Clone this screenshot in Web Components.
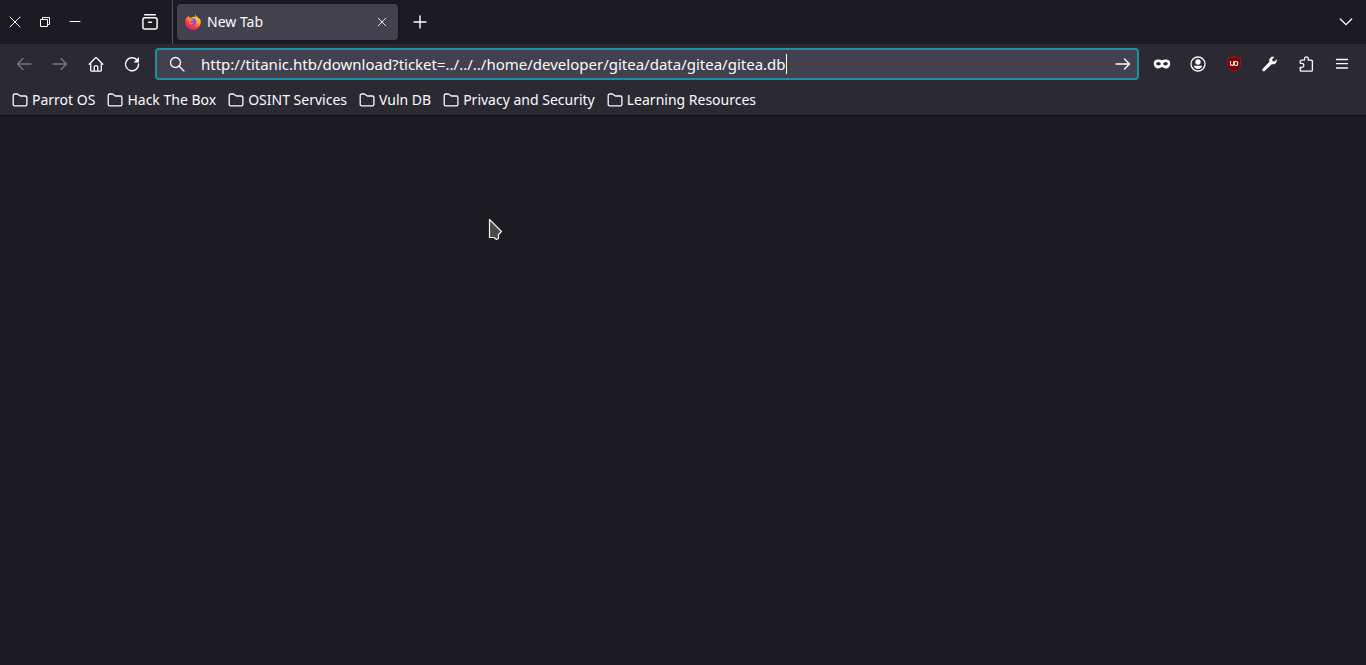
<!DOCTYPE html>
<html lang="en">
<head>
<meta charset="utf-8">
<title>New Tab</title>
<style>
html, body { height: 100%; }
body { margin: 0; background: #1c1b22; color: #fbfbfe; font: 14px/20px "Noto Sans", sans-serif; }
</style>
</head>
<body>
<browser-window></browser-window>
<script>
const ICONS = {
  close: '<path d="M3 3l10 10M13 3L3 13"/>',
  winclose: '<path stroke-width="1" d="M3 3l10 10M13 3L3 13"/>',
  restore: '<path stroke-width="1" stroke-linecap="butt" d="M3.500 5.500h7v7h-7zM5.500 5.500v-2h7v7h-2"/>',
  minimize: '<path stroke-width="1" d="M3 7.500h10"/>',
  view: '<path stroke-width="1.500" d="M2.700.8h10.600"/><rect x=".9" y="3.800" width="14.200" height="11.300" rx="2" stroke-width="1.500"/><path stroke-width="1.500" d="M6.500 8.300h3"/>',
  plus: '<path stroke-width="1.400" d="M8 2v12M2 8h12"/>',
  chevron: '<path stroke-width="1.300" d="M2.300 5L8 10.700 13.700 5"/>',
  back: '<path stroke-width="1.300" d="M15 8H1.600M7 2.500L1.500 8 7 13.500"/>',
  forward: '<path stroke-width="1.300" d="M1 8h13.400M9 2.500L14.500 8 9 13.500"/>',
  go: '<path stroke-width="1.400" d="M1 8h13.400M9.500 3l5 5-5 5"/>',
  home: '<path stroke-width="1.300" stroke-linejoin="round" d="M1.200 8.200L7.300 2q.7-.7 1.400 0l6.100 6.200M2.700 7v7.200q0 1 1 1h8.600q1 0 1-1V7M6.200 15v-4.200q0-1 1-1h1.600q1 0 1 1V15"/>',
  reload: '<path stroke-width="1.400" d="M13.300 4.500A6.500 6.500 0 1 0 14.500 8"/><path fill="currentColor" stroke="none" d="M15 1v4.900q0 .6-.6.600H9.500z"/>',
  search: '<circle cx="6.500" cy="6.500" r="5" stroke-width="1.300"/><path stroke-width="1.300" d="M10.200 10.200l4.800 4.800"/>',
  mask: '<path fill="currentColor" stroke="none" fill-rule="evenodd" d="M4 3.500c1.700 0 2.800.7 4 .7s2.300-.7 4-.7c2.700 0 4.200 1.500 4.200 4s-1.700 5-4.200 5c-2 0-3-1.600-4-1.600s-2 1.600-4 1.600c-2.500 0-4.200-2.500-4.200-5s1.500-4 4.200-4zM4.400 6C3 6 2.200 7 2 8c.7.900 1.500 1.400 2.500 1.400S6.400 8.900 7 8c-.5-1.200-1.300-2-2.600-2zm7.200 0C10.300 6 9.500 6.800 9 8c.6.900 1.500 1.400 2.500 1.400S13.300 8.900 14 8c-.2-1-1-2-2.400-2z"/>',
  account: '<circle cx="8" cy="8" r="7" stroke-width="1.300"/><g fill="currentColor" stroke="none"><circle cx="8" cy="6" r="2.700"/><path d="M3.800 9.800h8.400C11.700 12 10 13 8 13s-3.700-1-4.200-3.200z"/></g>',
  shield: '<path fill="#800000" stroke="#a0252a" stroke-width=".6" d="M8 .5c2 1.300 4.200 1.800 6.500 1.800V8c0 3.700-2.500 5.700-6.500 7.500C4 13.700 1.500 11.700 1.500 8V2.300C3.800 2.300 6 1.800 8 .5z"/><path stroke="#fff" stroke-width="1.100" stroke-linecap="butt" d="M4.500 5v2.800q0 1.700 1.600 1.700t1.600-1.700V5"/><rect x="8.300" y="5.500" width="3.400" height="4" rx="1.600" stroke="#fff" stroke-width="1.100"/>',
  wrench: '<path fill="currentColor" stroke="none" d="M14.700 3.200L12.400 5.500l-1.900-.3-.3-1.900 2.200-2.200C10.700.5 8.900.8 7.900 2.200c-.8 1.100-.9 2.300-.5 3.500L.9 12.600c-.8.800-.8 1.700-.2 2.300.7.600 1.600.6 2.300-.2l6.700-6.500c1.300.4 2.700.1 3.700-.8 1.200-1.100 1.600-2.600 1.300-4.200z"/>',
  puzzle: '<path stroke-width="1.300" stroke-linejoin="round" d="M2.200 7.300V5.200q0-1 1-1H6.500V2.800a1.900 1.900 0 0 1 3.800 0v1.400h3.100q1 0 1 1v9q0 1-1 1H3.200q-1 0-1-1v-2.700h1.500a2 2 0 0 0 0-4.200z"/>',
  menu: '<path stroke-width="1.300" d="M2.500 3.500h11M2.500 7.700h11M2.500 12h11"/>',
  folder: '<path stroke-width="1.300" stroke-linejoin="round" d="M1.200 12.500v-9q0-1.500 1.500-1.500h2.500q.6 0 1 .4l1.500 1.200q.4.400 1 .4h4.800q1.400 0 1.400 1.400v7.100q0 1.300-1.400 1.300H2.700q-1.500 0-1.500-1.300z"/>',
  firefox: '<defs><linearGradient id="g" x1=".8" y1=".05" x2=".25" y2=".95"><stop stop-color="#fff44f"/><stop offset=".35" stop-color="#ffa92a"/><stop offset=".68" stop-color="#ff3b48"/><stop offset="1" stop-color="#e31587"/></linearGradient><radialGradient id="p" cy=".3"><stop stop-color="#a84bff"/><stop offset="1" stop-color="#6550df"/></radialGradient></defs><path fill="url(#g)" stroke="none" d="M10 .2c-.5 1.400.5 2.300 1.600 3.300-.9-.7-2.100-1-3.400-.8L5.100 4C4.200 3.500 4 2.400 4 1.700 3.100 2.200 2.600 3 2.400 3.800L1.900 2.900C.9 4.200.2 5.900.2 8a7.800 7.800 0 0 0 15.600.2c0-1.800-.6-3.300-1.600-4.300l.3 1.600C13.500 3.100 10.600 2.300 10 .2z"/><circle cx="7.800" cy="7.600" r="3.300" fill="url(#p)" stroke="none"/><path fill="#ff8b22" stroke="none" d="M2.300 4.800c1.300-1 2.800-1 3.900-.2l2.100.8c-.2 1-1.200 1.100-2 1.500-.5.400-.3 1-.8 1.500 1 1 2 .8 3.300.3-.7 1.700-2.500 2.300-4.400 1.300z"/>'
};

function define(name, html, setup) {
  const template = document.createElement('template');
  template.innerHTML = html;
  customElements.define(name, class extends HTMLElement {
    connectedCallback() {
      if (this.shadowRoot) return;
      this.attachShadow({ mode: 'open' }).append(template.content.cloneNode(true));
      if (setup) setup(this, this.shadowRoot);
    }
  });
}

define('ui-icon', `<style>
:host { display: block; flex: none; width: var(--icon, 16px); height: var(--icon, 16px); }
svg { display: block; width: 100%; height: 100%; overflow: visible; }
</style><svg viewBox="0 0 16 16" fill="none" stroke="currentColor" stroke-width="1.200" stroke-linecap="round" aria-hidden="true"></svg>`,
(host, root) => { root.querySelector('svg').innerHTML = ICONS[host.getAttribute('name')]; });

define('icon-button', `<style>
:host { display: block; flex: none; width: 36px; height: 36px; }
button { display: flex; align-items: center; justify-content: center; width: 100%; height: 100%; margin: 0; padding: 0; border: 0; border-radius: 4px; background: none; color: inherit; }
button:disabled { color: #77767e; }
button:enabled:hover { background: #52525e; }
</style><button type="button"></button>`,
(host, root) => {
  const button = root.querySelector('button');
  button.setAttribute('aria-label', host.getAttribute('label'));
  button.disabled = host.hasAttribute('disabled');
  const icon = document.createElement('ui-icon');
  icon.setAttribute('name', host.getAttribute('icon'));
  button.append(icon);
});

define('browser-tab', `<style>
:host { display: flex; align-items: center; box-sizing: border-box; width: 221px; height: 36px; padding: 0 4px 0 8px; border-radius: 4px; background: #42414d; box-shadow: 0 0 3px #0006; }
.title { flex: 1; padding-left: 6px; white-space: nowrap; }
icon-button { --icon: 12px; width: 24px; height: 24px; }
</style><ui-icon name="firefox"></ui-icon><span class="title"><slot></slot></span><icon-button icon="close" label="Close tab"></icon-button>`);

define('tab-strip', `<style>
:host { display: flex; align-items: center; height: 44px; background: #1c1b22; }
.controls { display: flex; width: 132px; }
.controls icon-button { width: 30px; }
.divider { align-self: stretch; width: 1px; margin: 0 4px; background: #55545c; }
.spacer { flex: 1; }
.new { margin-left: 4px; }
.all { margin-right: 2px; }
</style>
<div class="controls"><icon-button icon="winclose" label="Close window"></icon-button><icon-button icon="restore" label="Restore window"></icon-button><icon-button icon="minimize" label="Minimize window"></icon-button></div>
<icon-button icon="view" label="Recent browsing"></icon-button>
<div class="divider"></div>
<browser-tab>New Tab</browser-tab>
<icon-button class="new" icon="plus" label="New tab"></icon-button>
<div class="spacer"></div>
<icon-button class="all" icon="chevron" label="List all tabs"></icon-button>`);

define('address-bar', `<style>
:host { display: flex; flex: 1; align-items: center; box-sizing: border-box; min-width: 0; height: 32px; margin: 0 5px; padding-left: 12px; border: 2px solid #1f8fa8; border-radius: 4px; background: #42414d; }
label { display: flex; flex: 1; align-items: center; min-width: 0; }
input { field-sizing: content; min-width: 0; height: 24px; margin: 0 0 0 16px; padding: 0; border: 0; outline: 0; background: none; color: inherit; font: inherit; font-size: 15px; }
.caret { width: 1px; height: 20px; background: #fbfbfe; }
icon-button { width: 28px; height: 28px; }
</style>
<label><ui-icon name="search"></ui-icon><input type="text" aria-label="Search or enter address" spellcheck="false" value="http://titanic.htb/download?ticket=../../../home/developer/gitea/data/gitea/gitea.db"><span class="caret"></span></label>
<icon-button icon="go" label="Go"></icon-button>`);

define('nav-bar', `<style>
:host { display: flex; align-items: center; height: 40px; padding: 0 6px; background: #2b2a33; }
</style>
<icon-button icon="back" label="Back" disabled></icon-button><icon-button icon="forward" label="Forward" disabled></icon-button><icon-button icon="home" label="Home"></icon-button><icon-button icon="reload" label="Reload"></icon-button>
<address-bar></address-bar>
<icon-button icon="mask" label="Private mask"></icon-button><icon-button icon="account" label="Account"></icon-button><icon-button icon="shield" label="uBlock Origin"></icon-button><icon-button icon="wrench" label="Developer tools"></icon-button><icon-button icon="puzzle" label="Extensions"></icon-button><icon-button icon="menu" label="Application menu"></icon-button>`);

define('bookmark-folder', `<style>
:host { display: block; }
button { display: flex; align-items: center; gap: 4px; margin: 0; padding: 0; border: 0; background: none; color: inherit; font: inherit; white-space: nowrap; }
</style><button type="button"><ui-icon name="folder"></ui-icon><slot></slot></button>`);

define('bookmarks-bar', `<style>
:host { display: flex; align-items: center; gap: 12px; height: 31px; padding: 0 12px; border-bottom: 1px solid #0c0c0f; background: #2b2a33; }
</style>
<bookmark-folder>Parrot OS</bookmark-folder><bookmark-folder>Hack The Box</bookmark-folder><bookmark-folder>OSINT Services</bookmark-folder><bookmark-folder>Vuln DB</bookmark-folder><bookmark-folder>Privacy and Security</bookmark-folder><bookmark-folder>Learning Resources</bookmark-folder>`);

define('mouse-pointer', `<style>
:host { position: absolute; left: 488px; top: 102px; width: 15px; height: 23px; }
svg { display: block; }
</style><svg width="15" height="23" viewBox="0 0 15 23" aria-hidden="true"><path d="M1.500 1.500v18h4.500l2.500 2 2-1v-4l3-3z" fill="#4a4a4a" stroke="#f4f4f4" stroke-width="1.200" stroke-linejoin="round"/></svg>`);

define('browser-window', `<style>
:host { display: flex; flex-direction: column; min-height: 100%; }
main { position: relative; flex: 1; background: #1c1b22; }
</style><tab-strip></tab-strip><nav-bar></nav-bar><bookmarks-bar></bookmarks-bar><main><mouse-pointer></mouse-pointer></main>`);
</script>
</body>
</html>
